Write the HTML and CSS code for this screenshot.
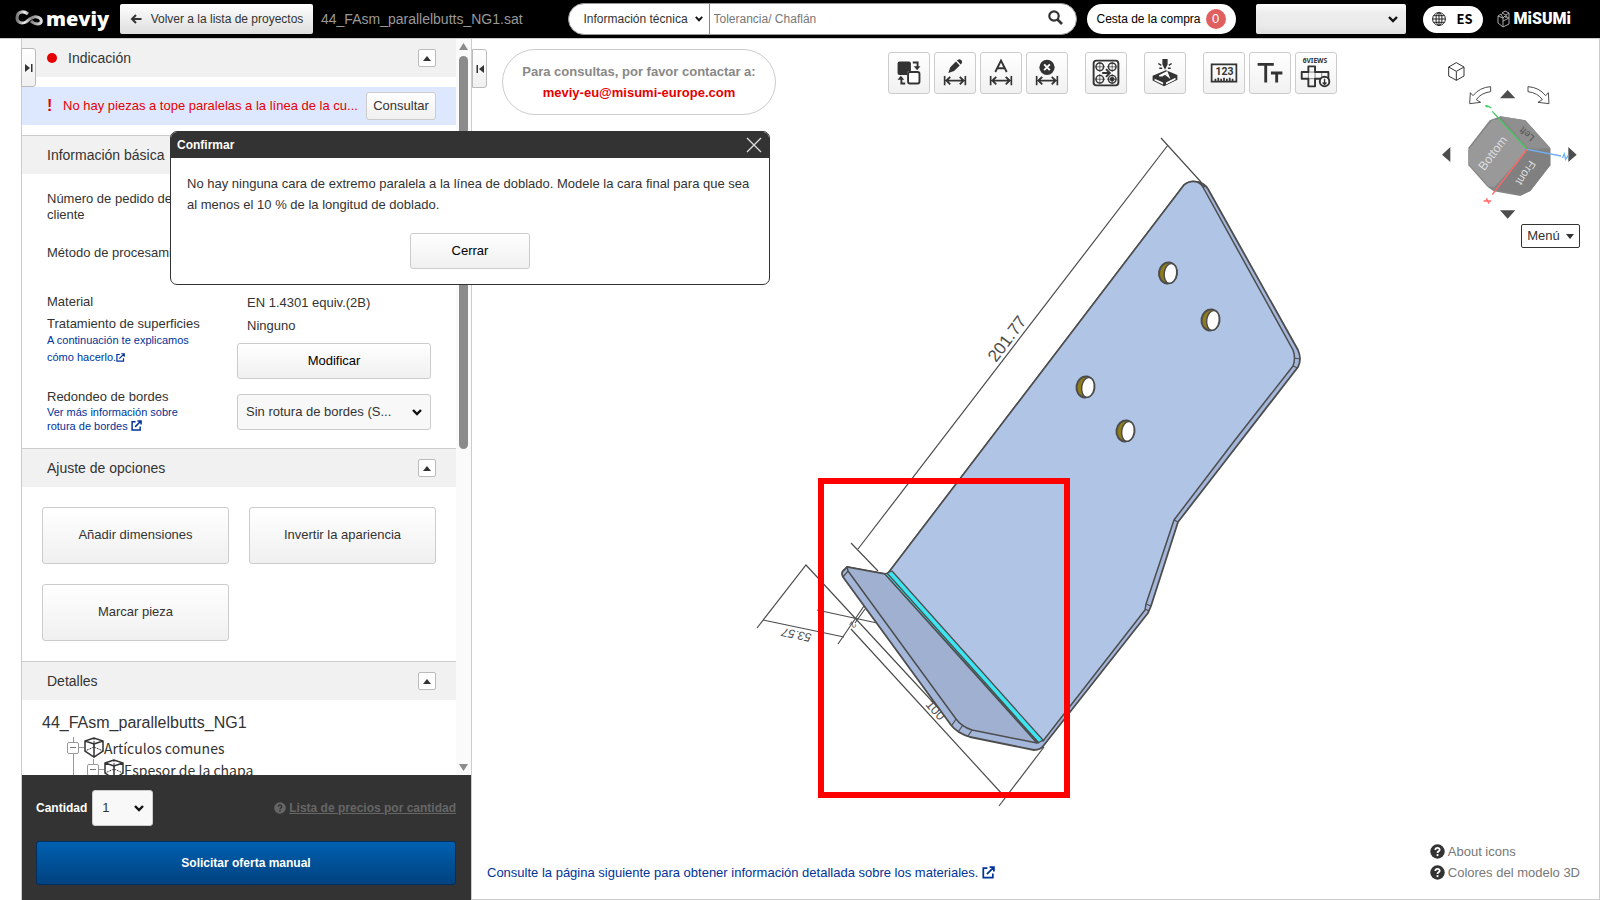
FILE: index.html
```
<!DOCTYPE html>
<html lang="es">
<head>
  <meta charset="UTF-8">
  <meta name="viewport" content="width=device-width, initial-scale=1.0">
  <title>meviy - 44_FAsm_parallelbutts_NG1.sat</title>
  <link rel="stylesheet" href="styles.css">
</head>
<body>
  <!-- shared symbols -->
  <svg class="defs" width="0" height="0">
    <symbol id="ext" viewBox="0 0 12 12"><path d="M5 2H1.2v8.8H10V7M7 1h4v4M10.8 1.2 4.5 7.5" fill="none" stroke="currentColor" stroke-width="1.6"/></symbol>
    <symbol id="help" viewBox="0 0 16 16"><circle cx="8" cy="8" r="7.7" fill="currentColor"/><path d="M5.7 6.3C5.8 3.3 10.5 3.5 10.3 6.2C10.2 7.8 8 7.7 8 9.5" fill="none" stroke="var(--mark, #fff)" stroke-width="1.9"/><circle cx="8" cy="11.8" r="1.2" fill="var(--mark, #fff)"/></symbol>
    <symbol id="up" viewBox="0 0 8 5"><path d="M0 5 4 0l4 5z" fill="currentColor"/></symbol>
    <symbol id="dim" viewBox="0 0 24 10"><path d="M1 0v10M23 0v10M3 5h18M7 1 3 5l4 4M17 1l4 4-4 4" fill="none" stroke="currentColor" stroke-width="2"/></symbol>
    <symbol id="part" viewBox="0 0 20 21"><path d="M10 1 1 4v10l9 6 9-6V4zM1 4l9 3 9-3M10 7v13" fill="none" stroke="#333" stroke-width="1.5"/><path d="M10 1v9L1 14M10 10l9 4" fill="none" stroke="#333" stroke-dasharray="2 1"/></symbol>
  </svg>

  <header class="topbar">
    <a class="logo" href="#" aria-label="meviy">
      <svg width="29" height="18" viewBox="0 0 29 18">
        <defs><linearGradient id="silver"><stop offset="0" stop-color="#777"/><stop offset=".3" stop-color="#eee"/><stop offset=".6" stop-color="#888"/><stop offset="1" stop-color="#ddd"/></linearGradient></defs>
        <path d="M13 4C8 0 2 2 2 8c0 5 5 6 9 4 4-3 7-6 11-5 5 1 6 6 1 7-3 0-5-1-7-3" fill="none" stroke="url(#silver)" stroke-width="3"/>
      </svg>
      <span>meviy</span>
    </a>
    <button class="back" type="button">
      <svg width="12" height="10" viewBox="0 0 12 10"><path d="M11.5 5H2M6 1 2 5l4 4" fill="none" stroke="#333" stroke-width="2"/></svg>
      Volver a la lista de proyectos
    </button>
    <span class="filename">44_FAsm_parallelbutts_NG1.sat</span>
    <form class="search">
      <select aria-label="Tipo de búsqueda"><option>Información técnica</option></select>
      <input type="text" aria-label="Buscar" placeholder="Tolerancia/ Chaflán">
      <button type="button" aria-label="Buscar"><svg width="15" height="15" viewBox="0 0 15 15"><circle cx="6" cy="6" r="4.7" fill="none" stroke="#333" stroke-width="2.2"/><path d="m9.5 9.5 4.5 4.5" stroke="#333" stroke-width="2.6"/></svg></button>
    </form>
    <button class="cart" type="button">Cesta de la compra <span class="count">0</span></button>
    <select class="account" aria-label="Cuenta"><option></option></select>
    <button class="lang" type="button">
      <svg width="14" height="14" viewBox="0 0 14 14" fill="none" stroke="#222"><circle cx="7" cy="7" r="6.4"/><ellipse cx="7" cy="7" rx="3" ry="6.4"/><path d="M7 .5v13M.5 7h13M1.5 3.7h11M1.5 10.3h11"/></svg>
      ES
    </button>
    <a class="misumi" href="#" aria-label="MiSUMi">
      <svg width="14" height="18" viewBox="0 0 14 18" fill="none" stroke="#aaa"><path d="M1 6v7l5 4 6-3V8L8 6 6 8zM1 6l3-2 2 4v9M6 11l6-3M5 3l3-2 4 2-3 2zM9 5v3M12 3v5" /></svg>
      <span>MiSUMi</span>
    </a>
  </header>

  <div class="page">
    <aside class="sidebar">
      <button class="tab tab-left" type="button" aria-label="Expandir"><svg width="8" height="8" viewBox="0 0 8 8"><path d="M0 0v8l5-4zM6 0h1.5v8H6z" fill="#333"/></svg></button>
      <div class="scroll">
        <div class="panel">
          <div class="section first">
            <span class="dot"></span><h2>Indicación</h2>
            <button class="fold" type="button" aria-label="Plegar"><svg width="8" height="5"><use href="#up"/></svg></button>
          </div>
          <div class="alert">
            <b>!</b>
            <span>No hay piezas a tope paralelas a la línea de la cu...</span>
            <button class="btn small" type="button">Consultar</button>
          </div>
          <div class="section"><h2>Información básica</h2></div>
          <div class="info">
            <div class="row order"><label for="order">Número de pedido del<br>cliente</label><input id="order" type="text"></div>
            <div class="row process"><span>Método de procesamiento</span></div>
            <div class="row material">
              <div class="names">
                <p>Material</p>
                <p>Tratamiento de superficies</p>
                <a href="#">A continuación te explicamos<br>cómo hacerlo.<svg width="9" height="9"><use href="#ext"/></svg></a>
              </div>
              <div>
                <p class="value">EN 1.4301 equiv.(2B)</p>
                <p class="value">Ninguno</p>
                <button class="btn" type="button">Modificar</button>
              </div>
            </div>
            <div class="row edges">
              <div>
                <label for="edge">Redondeo de bordes</label>
                <a href="#">Ver más información sobre<br>rotura de bordes <svg width="11" height="11"><use href="#ext"/></svg></a>
              </div>
              <select id="edge" class="btn"><option>Sin rotura de bordes (S...</option></select>
            </div>
          </div>
          <div class="section">
            <h2>Ajuste de opciones</h2>
            <button class="fold" type="button" aria-label="Plegar"><svg width="8" height="5"><use href="#up"/></svg></button>
          </div>
          <div class="options">
            <button class="btn" type="button">Añadir dimensiones</button>
            <button class="btn" type="button">Invertir la apariencia</button>
            <button class="btn" type="button">Marcar pieza</button>
          </div>
          <div class="section">
            <h2>Detalles</h2>
            <button class="fold" type="button" aria-label="Plegar"><svg width="8" height="5"><use href="#up"/></svg></button>
          </div>
          <div class="details">
            <h3>44_FAsm_parallelbutts_NG1</h3>
            <ul class="tree">
              <li><span class="minus"></span><svg width="20" height="21"><use href="#part"/></svg>Artículos comunes
                <ul>
                  <li><span class="minus"></span><svg width="20" height="21"><use href="#part"/></svg>Espesor de la chapa</li>
                </ul>
              </li>
            </ul>
          </div>
        </div>
        <div class="scrollbar">
          <svg width="9" height="7" viewBox="0 0 9 7"><path d="M4.500 0 9 7H0z" fill="#8b8b8b"/></svg>
          <div class="track"><div class="thumb"></div></div>
          <svg width="9" height="7" viewBox="0 0 9 7"><path d="M4.500 7 9 0H0z" fill="#8b8b8b"/></svg>
        </div>
      </div>
      <div class="order-bar">
        <div class="qty">
          <label for="qty">Cantidad</label>
          <select id="qty" class="btn"><option>1</option></select>
          <a href="#"><svg width="12" height="12"><use href="#help"/></svg> <span>Lista de precios por cantidad</span></a>
        </div>
        <button class="submit" type="button">Solicitar oferta manual</button>
      </div>
    </aside>

    <main class="viewer">
      <svg class="model" viewBox="472 39 1127 860" role="img" aria-label="Modelo 3D">
        <g stroke="#4d4d4d" stroke-width="1.2" fill="none">
          <path d="M1168 145 858 549M1161 138l40 44M851 543l27 28"/>
          <path d="M763 620l81 17M757 628l49-63 136 147M838 644l26-38M855 623l10-14M817 610l60 13M851 629l152 166M999 806l45-59"/>
        </g>
        <g fill="#4d4d4d" font-family="Liberation Sans, Arial, sans-serif">
          <text transform="translate(996 363) rotate(-53)" font-size="17">201.77</text>
          <text transform="translate(812 634) rotate(192)" font-size="12" font-style="italic">53.57</text>
          <text transform="translate(852 621) rotate(128)" font-size="9">2</text>
          <text transform="translate(925 705) rotate(48)" font-size="13">100</text>
        </g>
        <g stroke="#4d4d4d" stroke-width="1.8" stroke-linejoin="round">
          <path fill="#a4b7da" d="M889 572 1184 185Q1190 180 1198 182 1204 183 1208 189L1298 350Q1302 359 1298 367L1226 460 1178 522 1151 606 1148 613 1044 745Q1041 750 1034 750L970 737Q957 733 951 725L843 577Q841 573 843 571L847 567 885 574Q888 574 889 572z"/>
          <path stroke-width="1.5" fill="#b0c4e6" d="M889 572 1184 185Q1190 180 1197 182 1202 184 1204 189L1293 350Q1296 358 1293 366L1235 440 1174 520 1146 604 1145 610 1043 741z"/>
          <path stroke-width="1.5" fill="#9fb0d1" d="M847 567 885 574 1037 743 972 730Q962 727 956 719L848 571z"/>
          <path stroke-width="1.2" fill="#3fe4f3" d="M885 574 892 571 1043 740 1038 743z"/>
          <path stroke-width="1.2" fill="none" d="M887 573 1039 743M843 577l5-6M952 725l4-6M958 732l5-7M968 736l4-6M1174 520l4 2M1146 604l5 2M1145 609l4 2M1294 358l6 1M1293 366l5 2M1198 182l7 5"/>
        </g>
        <g id="holes" stroke="#4d4d4d" stroke-width="2">
          <g transform="translate(1168 273) rotate(8)"><ellipse rx="9" ry="10.5" fill="#8f7d1c"/><ellipse cx="2.5" rx="6.3" ry="10" fill="#fff" stroke-width="1.5"/></g>
          <g transform="translate(1210.5 320) rotate(8)"><ellipse rx="9" ry="10.5" fill="#8f7d1c"/><ellipse cx="2.5" rx="6.3" ry="10" fill="#fff" stroke-width="1.5"/></g>
          <g transform="translate(1085.5 387) rotate(8)"><ellipse rx="9" ry="10.5" fill="#8f7d1c"/><ellipse cx="2.5" rx="6.3" ry="10" fill="#fff" stroke-width="1.5"/></g>
          <g transform="translate(1125.5 431) rotate(8)"><ellipse rx="9" ry="10.5" fill="#8f7d1c"/><ellipse cx="2.5" rx="6.3" ry="10" fill="#fff" stroke-width="1.5"/></g>
        </g>
        <rect x="821" y="481" width="246" height="314" fill="none" stroke="#f00" stroke-width="6"/>
      </svg>

      <div class="viewer-top">
        <button class="tab" type="button" aria-label="Plegar panel"><svg width="8" height="8" viewBox="0 0 8 8"><path d="M8 0v8L3 4zM.5 0H2v8H.5z" fill="#333"/></svg></button>
        <div class="contact">Para consultas, por favor contactar a:<br><a href="#">meviy-eu@misumi-europe.com</a></div>
        <div class="toolbar">
          <div class="tools">
            <button type="button" aria-label="Cambiar cara"><svg viewBox="0 0 42 42"><rect x="9" y="9" width="14" height="14" rx="2" fill="#333"/><rect x="19" y="19" width="14" height="14" rx="3" fill="#fff"/><rect x="20" y="20" width="12" height="12" rx="2" fill="#fff" stroke="#333" stroke-width="2"/><path d="M25 10h5v5M17 32h-4v-5" fill="none" stroke="#333" stroke-width="2"/><path d="M26 14h7l-3.5 4zM9 28h7l-3.5-4z" fill="#333"/></svg></button>
            <button type="button" aria-label="Editar cota"><svg viewBox="0 0 42 42" color="#333"><path d="m14 21 2-6 6-6 4 4-6 6zM23 8l1-1q2-1 3 0l1 1q1 1 0 3l-1 1z" fill="#333"/><use href="#dim" x="9" y="24" width="24" height="10"/></svg></button>
            <button type="button" aria-label="Texto de cota"><svg viewBox="0 0 42 42" color="#333"><path d="m15 20 6-12 6 12M17 16h8" fill="none" stroke="#333" stroke-width="2"/><use href="#dim" x="9" y="24" width="24" height="10"/></svg></button>
            <button type="button" aria-label="Borrar cota"><svg viewBox="0 0 42 42" color="#333"><circle cx="21" cy="15" r="8" fill="#333"/><path d="m18 12 6 6m0-6-6 6" stroke="#fff" stroke-width="2"/><use href="#dim" x="9" y="24" width="24" height="10"/></svg></button>
          </div>
          <div class="tools">
            <button type="button" aria-label="Agujeros"><svg viewBox="0 0 42 42" fill="none" stroke="#333"><rect x="8" y="8" width="26" height="26" rx="3" stroke-width="2"/><g stroke-width="1.5"><circle cx="14.5" cy="14.5" r="4"/><circle cx="27.5" cy="14.5" r="4"/><circle cx="14.5" cy="27.5" r="4"/><circle cx="27.5" cy="27.5" r="4"/></g><path d="M9 14.5h11M14.5 9v11M22 14.5h11M27.5 9v11M9 27.5h11M14.5 22v11M22 27.5h11M27.5 22v11" stroke-width=".7"/><path d="M17 21h7m-3-4 4 4-4 4" stroke-width="2"/><circle cx="27.5" cy="27.5" r="2" fill="#333"/></svg></button>
          </div>
          <div class="tools">
            <button type="button" aria-label="Grabado"><svg viewBox="0 0 42 42"><path d="m8 24 14-6 12 5v5L20 35 8 29z" fill="#333"/><path d="m10 27 9 4v2l-9-4zM22 31l10-5v2l-10 5z" fill="#fff"/><path d="m15 24 8-4 2 5-4-3-3 2z" fill="none" stroke="#fff" stroke-width="1.5"/><path d="M19 7h4v5l-2 4-2-4zM14 11l3 2M15 16h3M28 11l-3 2M27 16h-3" fill="#333" stroke="#333" stroke-width="1.5"/></svg></button>
          </div>
          <div class="tools">
            <button type="button" aria-label="Medir"><svg viewBox="0 0 42 42"><path d="M8 12h26v18H8zM12 30v-3m3 3v-4m3 4v-3m3 3v-4m3 4v-3m3 3v-4m3 4v-3" fill="none" stroke="#333" stroke-width="1.8"/><text x="12" y="23" font-family="Roboto, sans-serif" font-size="11" font-weight="700" fill="#333">123</text></svg></button>
            <button type="button" aria-label="Texto"><svg viewBox="0 0 42 42"><path d="M8 12h17M16.5 12v19M22 21h12M28 21v10" fill="none" stroke="#333" stroke-width="3"/></svg></button>
            <button type="button" aria-label="6 vistas"><svg viewBox="0 0 42 42" fill="none" stroke="#333"><text x="7" y="11" font-family="Noto Sans, sans-serif" font-size="7" font-weight="700" fill="#333" stroke="none">6VIEWS</text><path d="M13 14h7v6h14v7H20v8h-7v-8H6v-7h7z" stroke-width="2" stroke-linejoin="round"/><path d="M13 20h7v7h-7zM27 20v7" stroke-width=".6"/><circle cx="30" cy="30" r="5" fill="#fff" stroke-width="2"/><path d="M30 27v6m-2-2 2 2 2-2" stroke-width="1.5"/></svg></button>
          </div>
        </div>
        <div class="viewcube">
          <svg width="143" height="165" viewBox="110 50 429 495">
            <path d="M145 80 168 67l23 13v27l-23 13-23-13zM145 80l23 13 23-13M168 93v27" fill="none" stroke="#333" stroke-width="3"/>
            <path id="turn" d="M271 139v15q-30 4-43 24l13 8-33 4 2-33 8 9q20-25 53-27z" fill="#fff" stroke="#4d4d4d" stroke-width="3"/>
            <use href="#turn" transform="translate(654 0) scale(-1 1)"/>
            <path d="m322 149 23 25h-46zM322 535l23-25h-46zM125 343l25-23v45zM529 343l-25-23v45z" fill="#4d4d4d"/>
            <path d="M204 322 268 240 300 228 375 240 450 323V375L390 452 360 467 280 453 262 440 204 375z" fill="#868686"/>
            <path d="M204 330 275 240 300 236 378 320 370 342 282 440 265 438 204 370z" fill="#999"/>
            <path d="M300 228 375 240 450 323 384 324z" fill="#8f8f8f"/>
            <path d="M384 330 450 326V375L390 452 360 464 290 448z" fill="#808080"/>
            <g font-family="Liberation Sans, sans-serif" fill="#ddd">
              <text transform="translate(252 393) rotate(-53)" font-size="37">Bottom</text>
              <text transform="translate(388 358) rotate(123)" font-size="34">Front</text>
              <text transform="translate(404 290) rotate(222)" font-size="29" fill="#555">Left</text>
            </g>
            <g fill="none" stroke-width="4"><path d="M380 327 276 213M255 195l9 3 9 5M264 198l-8 1" stroke="#3fc95f"/><path d="M380 327 276 463M250 482h22M258 474l8 16" stroke="#ff6666"/><path d="m380 327 102 20M486 353l6-12 4 16 8-12" stroke="#70b0f4"/></g>
          </svg>
          <button class="menu" type="button">Menú <svg width="8" height="5" viewBox="0 0 8 5"><path d="M0 0h8L4 5z" fill="#333"/></svg></button>
        </div>
      </div>

      <div class="viewer-bottom">
        <a class="materials" href="#">Consulte la página siguiente para obtener información detallada sobre los materiales. <svg width="13" height="13"><use href="#ext"/></svg></a>
        <div class="legend">
          <a href="#"><svg width="15" height="15"><use href="#help"/></svg>About icons</a>
          <a href="#"><svg width="15" height="15"><use href="#help"/></svg>Colores del modelo 3D</a>
        </div>
      </div>
    </main>
  </div>

  <div class="dialog" role="dialog" aria-labelledby="dialog-title">
    <div class="dialog-head">
      <h2 id="dialog-title">Confirmar</h2>
      <button type="button" aria-label="Cerrar ventana"><svg width="16" height="16" viewBox="0 0 16 16"><path d="m1 1 14 14M15 1 1 15" stroke="#ddd" stroke-width="1.3"/></svg></button>
    </div>
    <p>No hay ninguna cara de extremo paralela a la línea de doblado. Modele la cara final para que sea al menos el 10 % de la longitud de doblado.</p>
    <button class="btn" type="button">Cerrar</button>
  </div>
</body>
</html>
```

FILE: styles.css
```
* { margin: 0; padding: 0; box-sizing: border-box; }
body { height: 100vh; display: flex; flex-direction: column; overflow: hidden; background: #fff; color: #333; font: 13px/16px "Liberation Sans", Arial, sans-serif; }
button, select, input { font: inherit; color: inherit; }
button { border: 0; background: none; cursor: pointer; }
a { color: #039; text-decoration: none; }
ul { list-style: none; }
.defs { position: absolute; }
select { appearance: none; border-radius: 0; background: url("data:image/svg+xml,%3Csvg xmlns='http://www.w3.org/2000/svg' width='10' height='7'%3E%3Cpath d='M1 1l4 4 4-4' fill='none' stroke='%23111' stroke-width='2.4'/%3E%3C/svg%3E") no-repeat right 8px center; }

/* top bar */
.topbar { flex: none; height: 39px; padding: 0 29px 0 15px; display: flex; align-items: center; background: #000; border-bottom: 1px solid #ccc; font-size: 12px; }
.logo { width: 105px; display: flex; align-items: center; gap: 2px; color: #fff; font: 800 20px/20px "Open Sans", sans-serif; }
.back { width: 193px; height: 30px; display: flex; align-items: center; justify-content: center; gap: 9px; border-radius: 2px; background: linear-gradient(#fff, #ddd); }
.filename { margin-left: 8px; color: #999; font-size: 14px; }
.search { width: 509px; height: 32px; margin-left: auto; display: flex; background: #fff; border: 1px solid #999; border-radius: 16px; overflow: hidden; }
.search select { width: 141px; padding-left: 15px; border: 0; border-right: 1px solid #888; background-position: right 6px center; background-size: 8px; }
.search input { flex: 1; min-width: 0; padding-left: 4px; border: 0; outline: 0; }
.search input::placeholder { color: #777; }
.search button { width: 40px; }
.cart { width: 149px; height: 30px; margin-left: 10px; display: flex; align-items: center; justify-content: center; gap: 5px; border-radius: 16px; background: #fff; color: #000; }
.count { width: 20px; height: 20px; border-radius: 50%; background: #e06060; color: #fff; font-size: 13px; line-height: 20px; }
.account { width: 150px; height: 30px; margin-left: 20px; border: 0; border-radius: 2px; background-color: #ececec; box-shadow: inset 0 8px 8px -4px #fff, inset 0 -8px 8px -4px #ddd; }
.lang { width: 60px; height: 27px; margin-left: 17px; display: flex; align-items: center; justify-content: center; gap: 10px; border-radius: 14px; background: #fff; color: #000; font: 700 13px/16px "Noto Sans CJK SC", sans-serif; }
.misumi { margin-left: 14px; display: flex; align-items: center; gap: 3px; color: #fff; font: 900 16px/18px Roboto, sans-serif; }

.page { flex: 1; min-height: 0; display: flex; padding-left: 21px; }

/* sidebar */
.sidebar { position: relative; flex: none; width: 451px; display: flex; flex-direction: column; border-left: 1px solid #ccc; border-right: 1px solid #ccc; }
.scroll { flex: 1; min-height: 0; display: flex; }
.panel { flex: 1; overflow: hidden; }
.scrollbar { width: 15px; padding: 4px 0; display: flex; flex-direction: column; align-items: center; background: #fafafa; }
.track { flex: 1; padding: 6px 0; }
.thumb { width: 9px; height: 56%; border-radius: 5px; background: #8b8b8b; }
.section { height: 39px; padding: 0 20px 0 25px; display: flex; align-items: center; background: #f1f1f1; border-top: 1px solid #ccc; }
.section.first { height: 38px; border-top: 0; }
.section h2 { font-size: 14px; font-weight: normal; }
.dot { width: 10px; height: 10px; margin-right: 11px; border-radius: 50%; background: #e60000; }
.fold { width: 18px; height: 18px; margin-left: auto; display: flex; align-items: center; justify-content: center; border: 1px solid #bbb; border-radius: 2px; background: #fff; }
.alert { height: 38px; margin: 10px 0; padding: 0 20px 0 25px; display: flex; align-items: center; background: #dde8ff; color: #e60000; }
.alert b { width: 16px; font-size: 16px; }
.alert span { white-space: nowrap; }
.btn { height: 36px; border: 1px solid #ccc; border-radius: 3px; background-color: #f8f8f8; color: #000; }
button.btn { background: linear-gradient(#fff, #f0f0f0); }
.btn.small { width: 70px; height: 28px; margin-left: auto; color: #333; }
.info { height: 274px; padding: 17px 25px 0; }
.row { display: grid; grid-template-columns: 190px 1fr; align-items: start; }
.order { height: 54px; }
.order input { height: 30px; border: 1px solid #ccc; }
.process { height: 46px; }
.names { padding-top: 3px; }
.names p:first-child { margin-bottom: 6px; }
.names a { display: block; font-size: 11px; line-height: 17px; }
.value { padding-left: 10px; line-height: 23px; }
.material .btn { width: 100%; margin-top: 6px; }
.edges { margin-top: 10px; }
.edges label { display: block; }
.edges a { display: block; font-size: 11px; line-height: 14px; }
.info a svg { vertical-align: -1px; }
.edges select { margin-top: 5px; padding-left: 8px; color: #333; }
.options { padding: 20px; display: grid; grid-template-columns: 1fr 1fr; gap: 20px; }
.options .btn { height: 57px; padding-bottom: 2px; color: #333; }
.details { padding: 12px 20px 0; }
.details h3 { font-size: 16px; font-weight: normal; line-height: 22px; }
.tree { padding-left: 25px; font: 14px/22px "Noto Sans CJK SC", sans-serif; }
.details > .tree { margin-top: 3px; }
.tree ul { padding-left: 20px; }
.tree li { position: relative; }
.tree li::before { content: ""; position: absolute; left: 6px; top: 0; bottom: 0; border-left: 1px solid #999; }
.tree li svg { vertical-align: top; }
.minus { position: relative; display: inline-block; width: 12px; height: 12px; margin: 5px 5px 0 0; border: 1px solid #999; border-radius: 2px; background: #fff; vertical-align: top; }
.minus::before { content: ""; position: absolute; left: 11px; top: 4px; width: 5px; height: 1px; background: #999; }
.minus::after { content: ""; position: absolute; left: 2px; right: 2px; top: 4px; height: 1px; background: #777; }
.order-bar { height: 125px; padding: 15px 15px 0 14px; background: #333; color: #fff; font-size: 12px; font-weight: bold; }
.qty { display: flex; align-items: center; gap: 5px; margin-bottom: 15px; }
.qty select { width: 61px; padding-left: 9px; color: #333; font-size: 13px; font-weight: normal; }
.qty a { margin-left: auto; color: #666; --mark: #333; }
.qty a span { text-decoration: underline; }
.qty a svg { vertical-align: -2px; }
.submit { width: 100%; height: 44px; border: 1px solid #003060; border-radius: 3px; background: linear-gradient(#0060b0, #004280); color: #fff; }
.tab { width: 15px; height: 39px; display: flex; align-items: center; justify-content: center; border: 1px solid #bbb; border-radius: 0 3px 3px 0; background: linear-gradient(#fff, #f0f0f0); }
.tab-left { position: absolute; left: -1px; top: 9px; z-index: 2; }

/* 3D viewer */
.viewer { position: relative; flex: 1; min-width: 0; display: flex; flex-direction: column; justify-content: space-between; border-right: 1px solid #ccc; border-bottom: 1px solid #ccc; }
.model { position: absolute; left: 0; top: 0; width: 100%; height: 100%; }
.viewer-top { position: relative; display: flex; align-items: flex-start; padding: 10px 19px 0 0; }
.contact { width: 274px; height: 66px; margin-left: 15px; padding-top: 11px; border: 1px solid #ccc; border-radius: 33px; color: #888; font-weight: bold; line-height: 21px; text-align: center; }
.contact a { color: #e60000; }
.toolbar { margin: 3px 100px 0 auto; display: flex; gap: 17px; }
.tools { display: flex; gap: 4px; }
.tools button { width: 42px; height: 42px; border: 1px solid #ccc; border-radius: 3px; background: linear-gradient(#fff, #f1f1f1); }
.tools svg { display: block; width: 40px; height: 40px; }
.viewcube { padding-top: 8px; display: flex; flex-direction: column; align-items: flex-end; }
.viewcube > svg { display: block; }
.menu { width: 59px; height: 24px; margin-top: 2px; display: flex; align-items: center; justify-content: center; gap: 6px; border: 1px solid #333; border-radius: 2px; background: #fff; }
.viewer-bottom { position: relative; padding: 0 19px 16px 15px; display: flex; justify-content: space-between; align-items: flex-end; }
.materials { line-height: 21px; }
.materials svg { vertical-align: -2px; }
.legend a { display: flex; align-items: center; gap: 3px; color: #777; line-height: 21px; }
.legend svg { color: #333; }

/* dialog */
.dialog { position: absolute; left: 170px; top: 131px; width: 600px; padding-bottom: 15px; border: 1px solid #333; border-radius: 7px; background: #fff; overflow: hidden; text-align: center; z-index: 10; }
.dialog-head { height: 26px; padding: 0 7px 0 6px; display: flex; align-items: center; justify-content: space-between; background: #333; color: #fff; }
.dialog-head h2 { font-size: 12px; }
.dialog-head svg { display: block; }
.dialog p { padding: 15px 16px; line-height: 21px; text-align: left; }
.dialog .btn { width: 120px; margin-top: 3px; }
```
